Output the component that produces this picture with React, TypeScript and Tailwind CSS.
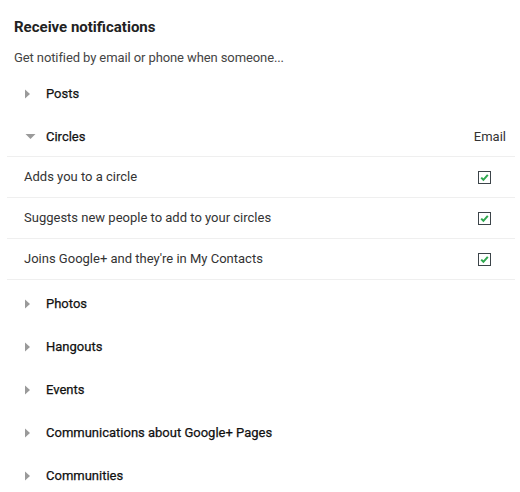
import React from "react";

function RightTri() {
  return (
    <svg width="6" height="10" viewBox="0 0 6 10" className="shrink-0">
      <polygon points="0,0.5 5,5 0,9.5" fill="#9a9a9a" />
    </svg>
  );
}

function DownTri() {
  return (
    <svg width="11" height="6" viewBox="0 0 11 6" className="shrink-0">
      <polygon points="0.5,0 10.5,0 5.5,5" fill="#9a9a9a" />
    </svg>
  );
}

function Check() {
  return (
    <svg width="13" height="13" viewBox="0 0 13 13">
      <rect x="0.5" y="0.5" width="12" height="12" fill="#fff" stroke="#3c4449" />
      <path d="M3.2 6.6 L5.4 8.8 L9.8 3.9" fill="none" stroke="#2fa84f" strokeWidth="2" />
    </svg>
  );
}

function Section({ label }: { label: string }) {
  return (
    <div className="flex h-[43px] items-center pl-[25px]">
      <div className="flex w-[21px] items-center">
        <RightTri />
      </div>
      <span className="text-[13px] font-normal text-[#111] [-webkit-text-stroke:0.25px_#111]">{label}</span>
    </div>
  );
}

function Row({ label }: { label: string }) {
  return (
    <div className="flex h-[41px] items-center border-b border-[#efefef] pl-[17px] pr-[24px]">
      <span className="flex-1 text-[13px] text-[#333]">{label}</span>
      <div className="flex w-[13px] items-center">
        <Check />
      </div>
    </div>
  );
}

export default function App() {
  return (
    <div className="h-[492px] w-[520px] overflow-hidden bg-white" style={{ fontFamily: "Roboto, Arial, sans-serif" }}>
      <div className="pl-[14px] pt-[17px]">
        <div className="text-[15px] font-bold leading-[20px] text-[#222]">Receive notifications</div>
        <div className="mt-[11px] text-[13px] leading-[20px] tracking-[-0.1px] text-[#444]">Get notified by email or phone when someone...</div>
      </div>
      <div className="mt-[4px]">
        <Section label="Posts" />
        <div className="ml-[7px] mr-[5px]">
          <div className="flex h-[42px] items-center border-b border-[#efefef] pl-[18px] pr-[9px] pt-[2px]">
            <div className="flex w-[21px] items-center">
              <DownTri />
            </div>
            <span className="flex-1 text-[13px] text-[#111] [-webkit-text-stroke:0.25px_#111]">Circles</span>
            <span className="text-[13px] text-[#333]">Email</span>
          </div>
          <Row label="Adds you to a circle" />
          <Row label="Suggests new people to add to your circles" />
          <Row label="Joins Google+ and they're in My Contacts" />
        </div>
        <div className="mt-[2px]">
          <Section label="Photos" />
          <Section label="Hangouts" />
          <Section label="Events" />
          <Section label="Communications about Google+ Pages" />
          <Section label="Communities" />
        </div>
      </div>
    </div>
  );
}
